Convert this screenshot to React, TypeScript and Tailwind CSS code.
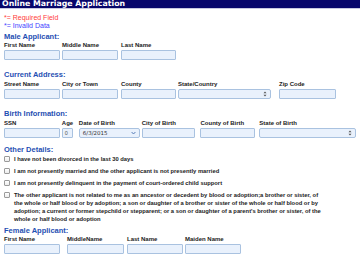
import React from "react";

const Label = ({ children, className = "" }: { children: React.ReactNode; className?: string }) => (
  <div className={`text-[6px] font-bold text-[#222] leading-[8px] whitespace-nowrap ${className}`}>{children}</div>
);

const Box = ({ className = "", value }: { className?: string; value?: string }) => (
  <div
    className={`h-[10px] border border-[#a9c2e0] bg-[#e9f1fc] rounded-[1px] text-[5.5px] leading-[8px] px-[2px] text-[#555] ${className}`}
  >
    {value}
  </div>
);

// up/down arrows used by the plain selects
const UpDown = () => (
  <svg width="4" height="6" viewBox="0 0 4 6">
    <path d="M0.5 2.3 L2 0.6 L3.5 2.3 Z M0.5 3.7 L2 5.4 L3.5 3.7 Z" fill="#555" />
  </svg>
);

// chevron used by the date dropdown
const Chevron = () => (
  <svg width="5" height="4" viewBox="0 0 5 4">
    <path d="M0.6 1 L2.5 3 L4.4 1" fill="none" stroke="#5a7fb8" strokeWidth="1" />
  </svg>
);

const SelectBox = ({ className = "", value, date = false }: { className?: string; value?: string; date?: boolean }) => (
  <div
    className={`h-[10px] border border-[#a9c2e0] bg-[#e9f1fc] rounded-[2px] flex items-center justify-between pl-[3px] pr-[3px] text-[5.5px] text-[#333] ${className}`}
  >
    <span style={{ fontFamily: '"DejaVu Sans", sans-serif' }}>{value}</span>
    {date ? <Chevron /> : <UpDown />}
  </div>
);

const Section = ({ children }: { children: React.ReactNode }) => (
  <div className="text-[7.5px] font-bold text-[#1f4fb3] leading-[9px]">{children}</div>
);

const Field = ({ label, className, children }: { label: string; className: string; children: React.ReactNode }) => (
  <div className={`flex flex-col ${className}`}>
    <Label className="mb-[1px]">{label}</Label>
    {children}
  </div>
);

const Check = ({ children }: { children: React.ReactNode }) => (
  <div className="flex items-start gap-[4px]">
    <div className="mt-[1px] w-[6px] h-[6px] shrink-0 border border-[#9a9a9a] bg-gradient-to-b from-white to-[#ececec] rounded-[1px]" />
    <div className="text-[5.8px] font-bold text-[#222] leading-[8px] whitespace-nowrap">{children}</div>
  </div>
);

export default function App() {
  return (
    <div
      className="w-[360px] h-[257px] bg-white overflow-hidden"
      style={{ fontFamily: '"Liberation Sans", Arial, sans-serif' }}
    >
      <div
        className="h-[9px] bg-[#07066b] border-b border-[#c8c8e0] px-[2px] text-white text-[7.8px] font-bold leading-[8px]"
        style={{ fontFamily: '"DejaVu Sans", Verdana, sans-serif' }}
      >
        Online Marriage Application
      </div>

      <div className="px-[4px] pt-[5px]">
        <div className="text-[7px] leading-[7.5px] text-[#ff3b3b]">*= Required Field</div>
        <div className="text-[7px] leading-[7.5px] text-[#4343ff]">*= Invalid Data</div>

        <div className="mt-[3px]">
          <Section>Male Applicant:</Section>
        </div>
        <div className="flex">
          <Field label="First Name" className="w-[56px]"><Box /></Field>
          <Field label="Middle Name" className="w-[56px] ml-[2px]"><Box /></Field>
          <Field label="Last Name" className="w-[55px] ml-[3px]"><Box /></Field>
        </div>

        <div className="mt-[10px]"><Section>Current Address:</Section></div>
        <div className="flex mt-[1px]">
          <Field label="Street Name" className="w-[56px]"><Box /></Field>
          <Field label="City or Town" className="w-[56px] ml-[2px]"><Box /></Field>
          <Field label="County" className="w-[55px] ml-[3px]"><Box /></Field>
          <Field label="State/Country" className="w-[93px] ml-[2px]"><SelectBox /></Field>
          <Field label="Zip Code" className="w-[57px] ml-[8px]"><Box /></Field>
        </div>

        <div className="mt-[10px]"><Section>Birth Information:</Section></div>
        <div className="flex mt-[1px]">
          <Field label="SSN" className="w-[56px]"><Box /></Field>
          <Field label="Age" className="w-[11px] ml-[2px]"><Box value="0" /></Field>
          <Field label="Date of Birth" className="w-[61px] ml-[6px]"><SelectBox value="6/3/2015" date /></Field>
          <Field label="City of Birth" className="w-[54px] ml-[2px]"><Box /></Field>
          <Field label="County of Birth" className="w-[55px] ml-[5px]"><Box /></Field>
          <Field label="State of Birth" className="w-[97px] ml-[4px]"><SelectBox /></Field>
        </div>

        <div className="mt-[7px]"><Section>Other Details:</Section></div>
        <div className="flex flex-col gap-[4px] mt-[1px]">
          <Check>I have not been divorced in the last 30 days</Check>
          <Check>I am not presently married and the other applicant is not presently married</Check>
          <Check>I am not presently delinquent in the payment of court-ordered child support</Check>
          <Check>
            The other applicant is not related to me as an ancestor or decedent by blood or adoption;a brother or sister, of
            <br />
            the whole or half blood or by adoption; a son or daughter of a brother or sister of the whole or half blood or by
            <br />
            adoption; a current or former stepchild or stepparent; or a son or daughter of a parent's brother or sister, of the
            <br />
            whole or half blood or adoption
          </Check>
        </div>

        <div className="mt-[3px]"><Section>Female Applicant:</Section></div>
        <div className="flex">
          <Field label="First Name" className="w-[56px]"><Box /></Field>
          <Field label="MiddleName" className="w-[57px] ml-[7px]"><Box /></Field>
          <Field label="Last Name" className="w-[56px] ml-[3px]"><Box /></Field>
          <Field label="Maiden Name" className="w-[56px] ml-[2px]"><Box /></Field>
        </div>
      </div>
    </div>
  );
}
